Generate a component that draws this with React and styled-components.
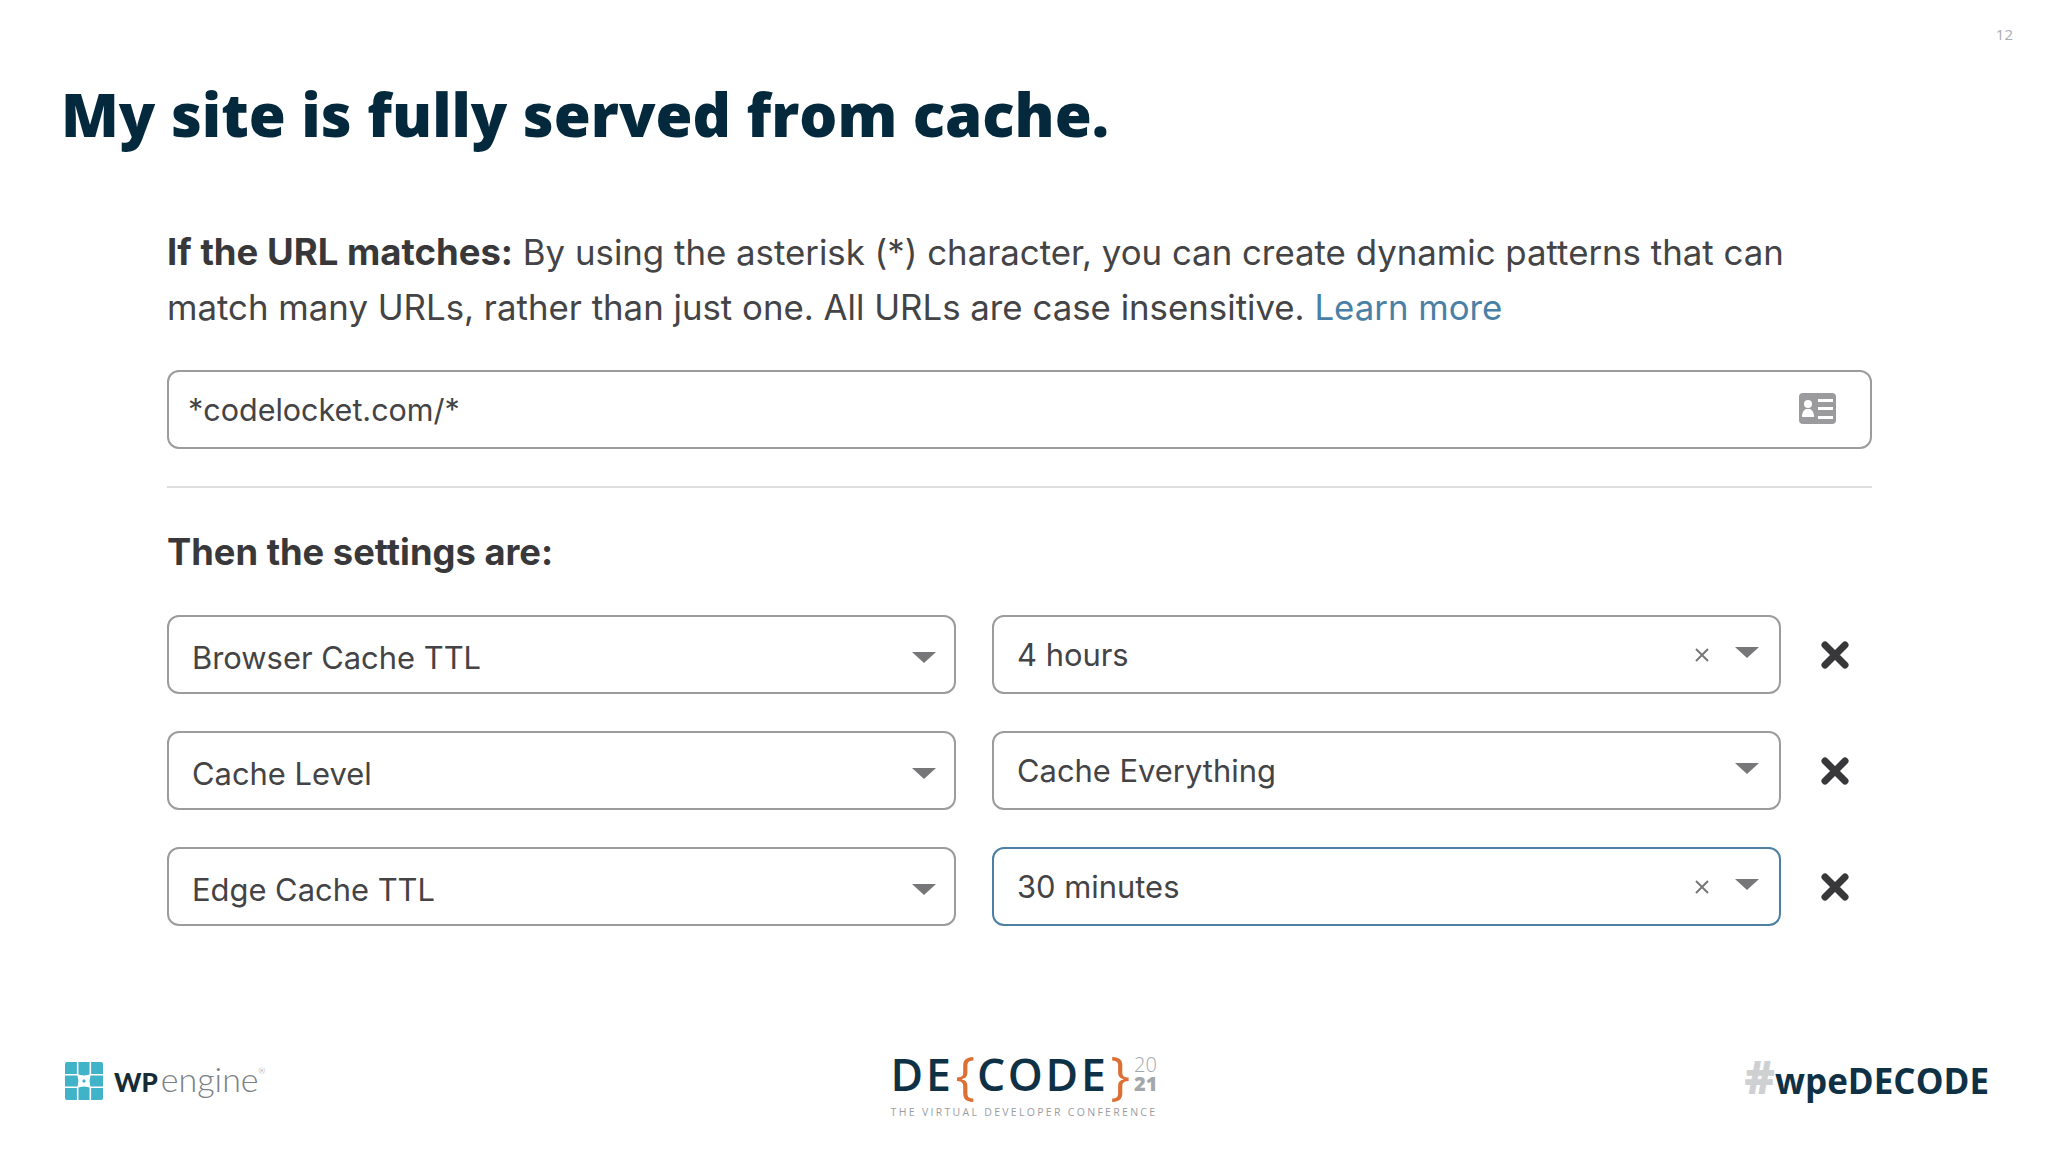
import React from 'react';
import styled, { createGlobalStyle } from 'styled-components';

const GlobalStyle = createGlobalStyle`
  html, body {
    margin: 0;
    padding: 0;
    background: #fff;
  }
`;

const Slide = styled.div`
  position: relative;
  width: 2048px;
  height: 1152px;
  overflow: hidden;
  background: #fff;
  display: flex;
  flex-direction: column;
  font-family: Inter, "Liberation Sans", sans-serif;
`;

const PageNumber = styled.div`
  position: absolute;
  top: 26px;
  right: 35px;
  font: 400 15px/16px "Open Sans", sans-serif;
  color: #a9adb0;
`;

const Title = styled.h1`
  margin: 76px 0 0 61px;
  font: 800 59.85px/76px "Open Sans", sans-serif;
  color: #04293d;
`;

const Content = styled.div`
  margin: 73px 0 0 167px;
  width: 1705px;
  display: flex;
  flex-direction: column;
`;

const Intro = styled.p`
  margin: 0;
  font-size: 34.8px;
  line-height: 55px;
  color: #444446;
  white-space: nowrap;
  b {
    font-size: 36.5px;
    font-weight: 700;
    color: #38383a;
  }
  a {
    color: #4b80a6;
  }
`;

const Field = styled.div`
  box-sizing: border-box;
  height: 79px;
  border: 2.5px solid ${p => (p.$focus ? '#4c7fa3' : '#9c9c9e')};
  border-radius: 12px;
  background: #fff;
  display: flex;
  align-items: center;
  padding: 0 ${p => p.$pr || 20}px 0 23px;
  color: #444446;
  font-size: 30.9px;
`;

const UrlField = styled(Field)`
  margin-top: 35px;
  justify-content: space-between;
  padding: 0 34px 0 19px;
  font-size: 30.5px;
`;

const FieldText = styled.span`
  flex: 1;
  position: relative;
  top: ${p => p.$dy || 0}px;
`;

const Divider = styled.div`
  height: 2px;
  margin-top: 37px;
  background: #dfdfe0;
`;

const SettingsHeading = styled.h2`
  margin: 42px 0 0;
  font-size: 36.3px;
  line-height: 44px;
  font-weight: 700;
  color: #38383a;
`;

const Rows = styled.div`
  margin-top: 41px;
  display: flex;
  flex-direction: column;
  gap: 37px;
`;

const Row = styled.div`
  display: grid;
  grid-template-columns: 789px 789px 1fr;
  column-gap: 36px;
  align-items: center;
`;

const RemoveButton = styled.div`
  display: flex;
  justify-content: flex-start;
  margin-left: 4px;
`;

const Caret = styled.span`
  width: 0;
  height: 0;
  margin-left: ${p => p.$ml || 0}px;
  position: relative;
  top: ${p => p.$dy || 0}px;
  border-left: 12px solid transparent;
  border-right: 12px solid transparent;
  border-top: 11px solid #77777a;
`;

const CardSvg = styled.svg`
  margin-top: -3px;
`;

const Footer = styled.div`
  margin-top: auto;
  height: 122px;
  display: grid;
  grid-template-columns: 1fr auto 1fr;
`;

const WpLogo = styled.div`
  display: flex;
  align-items: flex-start;
  padding: 32px 0 0 65px;
`;

const WpWord = styled.span`
  margin-left: 11px;
  font: 900 26px/40px Lato, sans-serif;
  color: #152b35;
`;

const EngineWord = styled.span`
  margin-left: 3px;
  font: 300 34px/34px Lato, sans-serif;
  color: #7a8085;
  sup {
    font-size: 8px;
    line-height: 0;
    position: relative;
    top: -6px;
  }
`;

const DecodeLogo = styled.div`
  display: flex;
  flex-direction: column;
  padding-top: 19px;
`;

const DecodeTop = styled.div`
  display: flex;
  align-items: center;
  height: 50px;
`;

const DecodeWord = styled.span`
  font: 600 44.5px/50px "Open Sans", sans-serif;
  letter-spacing: 2.7px;
  color: #0f3146;
`;

const Brace = styled.span`
  margin: 0 2px;
  font: 400 52px/50px "Open Sans", sans-serif;
  color: #dd6f35;
`;

const Year = styled.div`
  margin-left: auto;
  display: flex;
  flex-direction: column;
  font: 400 20px/19px "Open Sans", sans-serif;
  color: #a5a8ab;
`;

const YearPart = styled.span`
  font-weight: ${p => p.$weight};
`;

const Tagline = styled.div`
  margin-top: 6px;
  font: 400 10.5px/14px "Open Sans", sans-serif;
  letter-spacing: 2.3px;
  color: #9a9da1;
  white-space: nowrap;
`;

const Hashtag = styled.div`
  justify-self: end;
  padding: 26px 59px 0 0;
  font: 700 35px/50px "Open Sans", sans-serif;
  color: #0f3146;
  span {
    font-size: 46px;
    font-weight: 800;
    line-height: 0;
    color: #cfd0d2;
  }
`;

const CardIcon = () => (
  <CardSvg width="37" height="31" viewBox="0 0 37 31">
    <rect width="37" height="31" rx="4" fill="#9b9b9d" />
    <circle cx="9" cy="11" r="4" fill="#fff" />
    <path d="M3 24c0-5 2-7 4-8h4c2 1 4 3 4 8z" fill="#fff" />
    <path d="M19 6h15v3H19zM19 14h15v3H19zM19 23h15v3H19z" fill="#fff" />
  </CardSvg>
);

const ClearIcon = () => (
  <svg width="14" height="14" viewBox="0 0 14 14">
    <path d="M1 1l12 12M13 1L1 13" stroke="#77777a" strokeWidth="2" />
  </svg>
);

const RemoveIcon = () => (
  <svg width="28" height="28" viewBox="0 0 28 28">
    <path d="M4 4l20 20M24 4L4 24" stroke="#38383a" strokeWidth="7" strokeLinecap="round" />
  </svg>
);

const WpMark = () => (
  <svg width="38" height="38" viewBox="0 0 39 39">
    <rect width="39" height="39" rx="2" fill="#41b3c9" />
    <path d="M13 0v13M26 0v13M13 26v13M26 26v13M0 13h13M0 26h13M26 13h13M26 26h13" stroke="#fff" strokeWidth="1.6" />
    <path d="M12 12Q19.5 15.5 27 12Q23.5 19.5 27 27Q19.5 23.500 12 27Q15.5 19.5 12 12z" fill="#fff" />
    <path d="M19.500 17.500l2 2-2 2-2-2z" fill="#41b3c9" />
  </svg>
);

const settings = [
  { name: 'Browser Cache TTL', value: '4 hours', clear: true },
  { name: 'Cache Level', value: 'Cache Everything' },
  { name: 'Edge Cache TTL', value: '30 minutes', clear: true, focus: true },
];

const App = () => (
  <Slide>
    <GlobalStyle />
    <PageNumber>12</PageNumber>
    <Title>My site is fully served from cache.</Title>
    <Content>
      <Intro>
        <b>If the URL matches:</b> By using the asterisk (*) character, you can create dynamic patterns that can
        <br />
        match many URLs, rather than just one. All URLs are case insensitive. <a>Learn more</a>
      </Intro>
      <UrlField>
        <FieldText>*codelocket.com/*</FieldText>
        <CardIcon />
      </UrlField>
      <Divider />
      <SettingsHeading>Then the settings are:</SettingsHeading>
      <Rows>
        {settings.map(s => (
          <Row key={s.name}>
            <Field $pr={18}>
              <FieldText $dy={3}>{s.name}</FieldText>
              <Caret $dy={3} />
            </Field>
            <Field $focus={s.focus} $pr={20}>
              <FieldText>{s.value}</FieldText>
              {s.clear && <ClearIcon />}
              <Caret $ml={s.clear ? 26 : 0} $dy={-2} />
            </Field>
            <RemoveButton><RemoveIcon /></RemoveButton>
          </Row>
        ))}
      </Rows>
    </Content>
    <Footer>
      <WpLogo>
        <WpMark />
        <WpWord>WP</WpWord>
        <EngineWord>engine<sup>®</sup></EngineWord>
      </WpLogo>
      <DecodeLogo>
        <DecodeTop>
          <DecodeWord>DE</DecodeWord>
          <Brace>{'{'}</Brace>
          <DecodeWord>CODE</DecodeWord>
          <Brace>{'}'}</Brace>
          <Year>
            <YearPart $weight={300}>20</YearPart>
            <YearPart $weight={800}>21</YearPart>
          </Year>
        </DecodeTop>
        <Tagline>THE VIRTUAL DEVELOPER CONFERENCE</Tagline>
      </DecodeLogo>
      <Hashtag><span>#</span>wpeDECODE</Hashtag>
    </Footer>
  </Slide>
);

export default App;
